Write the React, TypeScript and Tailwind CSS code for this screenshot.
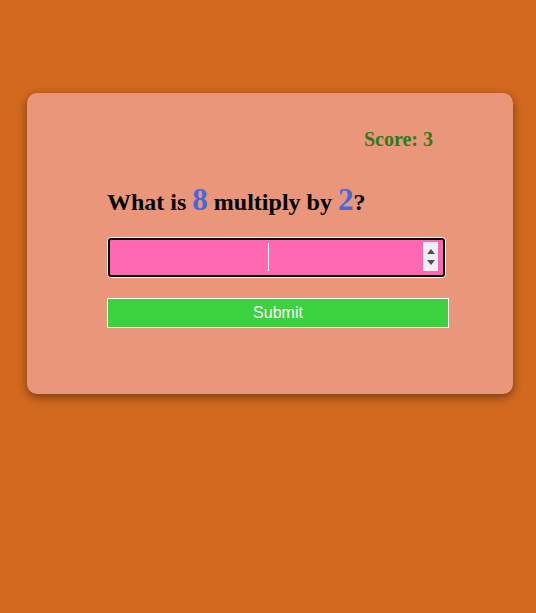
import React, { useState } from "react";

const App = () => {
    const [answer, setAnswer] = useState("");
    const score = 3;
    const a = 8;
    const b = 2;

    const handleSubmit = (e) => {
        e.preventDefault();
        setAnswer("");
    };

    return (
        <div className="min-h-screen w-full bg-[#d2691e] pt-[93px] font-['Liberation_Serif',serif]">
            <div className="ml-[27px] w-[486px] rounded-[10px] bg-[#e9967a] px-[80px] pt-[34px] pb-[66px] shadow-[0_3px_10px_rgba(0,0,0,0.45)]">
                <div className="text-right text-[20px] leading-[24px] font-bold text-[#2a7d1c]">
                    Score: {score}
                </div>
                <div className="mt-[29px] h-[43px] text-[24px] leading-[40px] font-bold text-black">
                    What is <span className="text-[31px] font-bold text-[#4169e1]">{a}</span> multiply by{" "}
                    <span className="text-[31px] font-bold text-[#4169e1]">{b}</span>?
                </div>
                <form onSubmit={handleSubmit}>
                    <div className="relative mt-[14px] h-[41px] w-[339px] rounded-[4px] border border-white">
                        <div className="h-full w-full rounded-[3px] border-2 border-black bg-[#ff69b4]">
                            <input
                                className="h-full w-full bg-transparent text-center font-['Liberation_Sans',sans-serif] text-[16px] text-white caret-white outline-none"
                                type="text"
                                value={answer}
                                onChange={(e) => setAnswer(e.target.value)}
                            />
                        </div>
                        <div className="pointer-events-none absolute left-[160px] top-[5px] h-[28px] w-px bg-white" />
                        <div className="absolute right-[7px] top-[4px] flex h-[29px] w-[15px] flex-col items-center justify-center gap-[6px] bg-[#f0f0f0]">
                            <svg width="8" height="5" viewBox="0 0 8 5">
                                <path d="M4 0 L8 5 L0 5 Z" fill="#505050" />
                            </svg>
                            <svg width="8" height="5" viewBox="0 0 8 5">
                                <path d="M0 0 L8 0 L4 5 Z" fill="#505050" />
                            </svg>
                        </div>
                    </div>
                    <button
                        type="submit"
                        className="mt-[20px] block h-[30px] w-[342px] border border-white bg-[#3bd13f] font-['Liberation_Sans',sans-serif] text-[16px] text-white"
                    >
                        Submit
                    </button>
                </form>
            </div>
        </div>
    );
};

export default App;
